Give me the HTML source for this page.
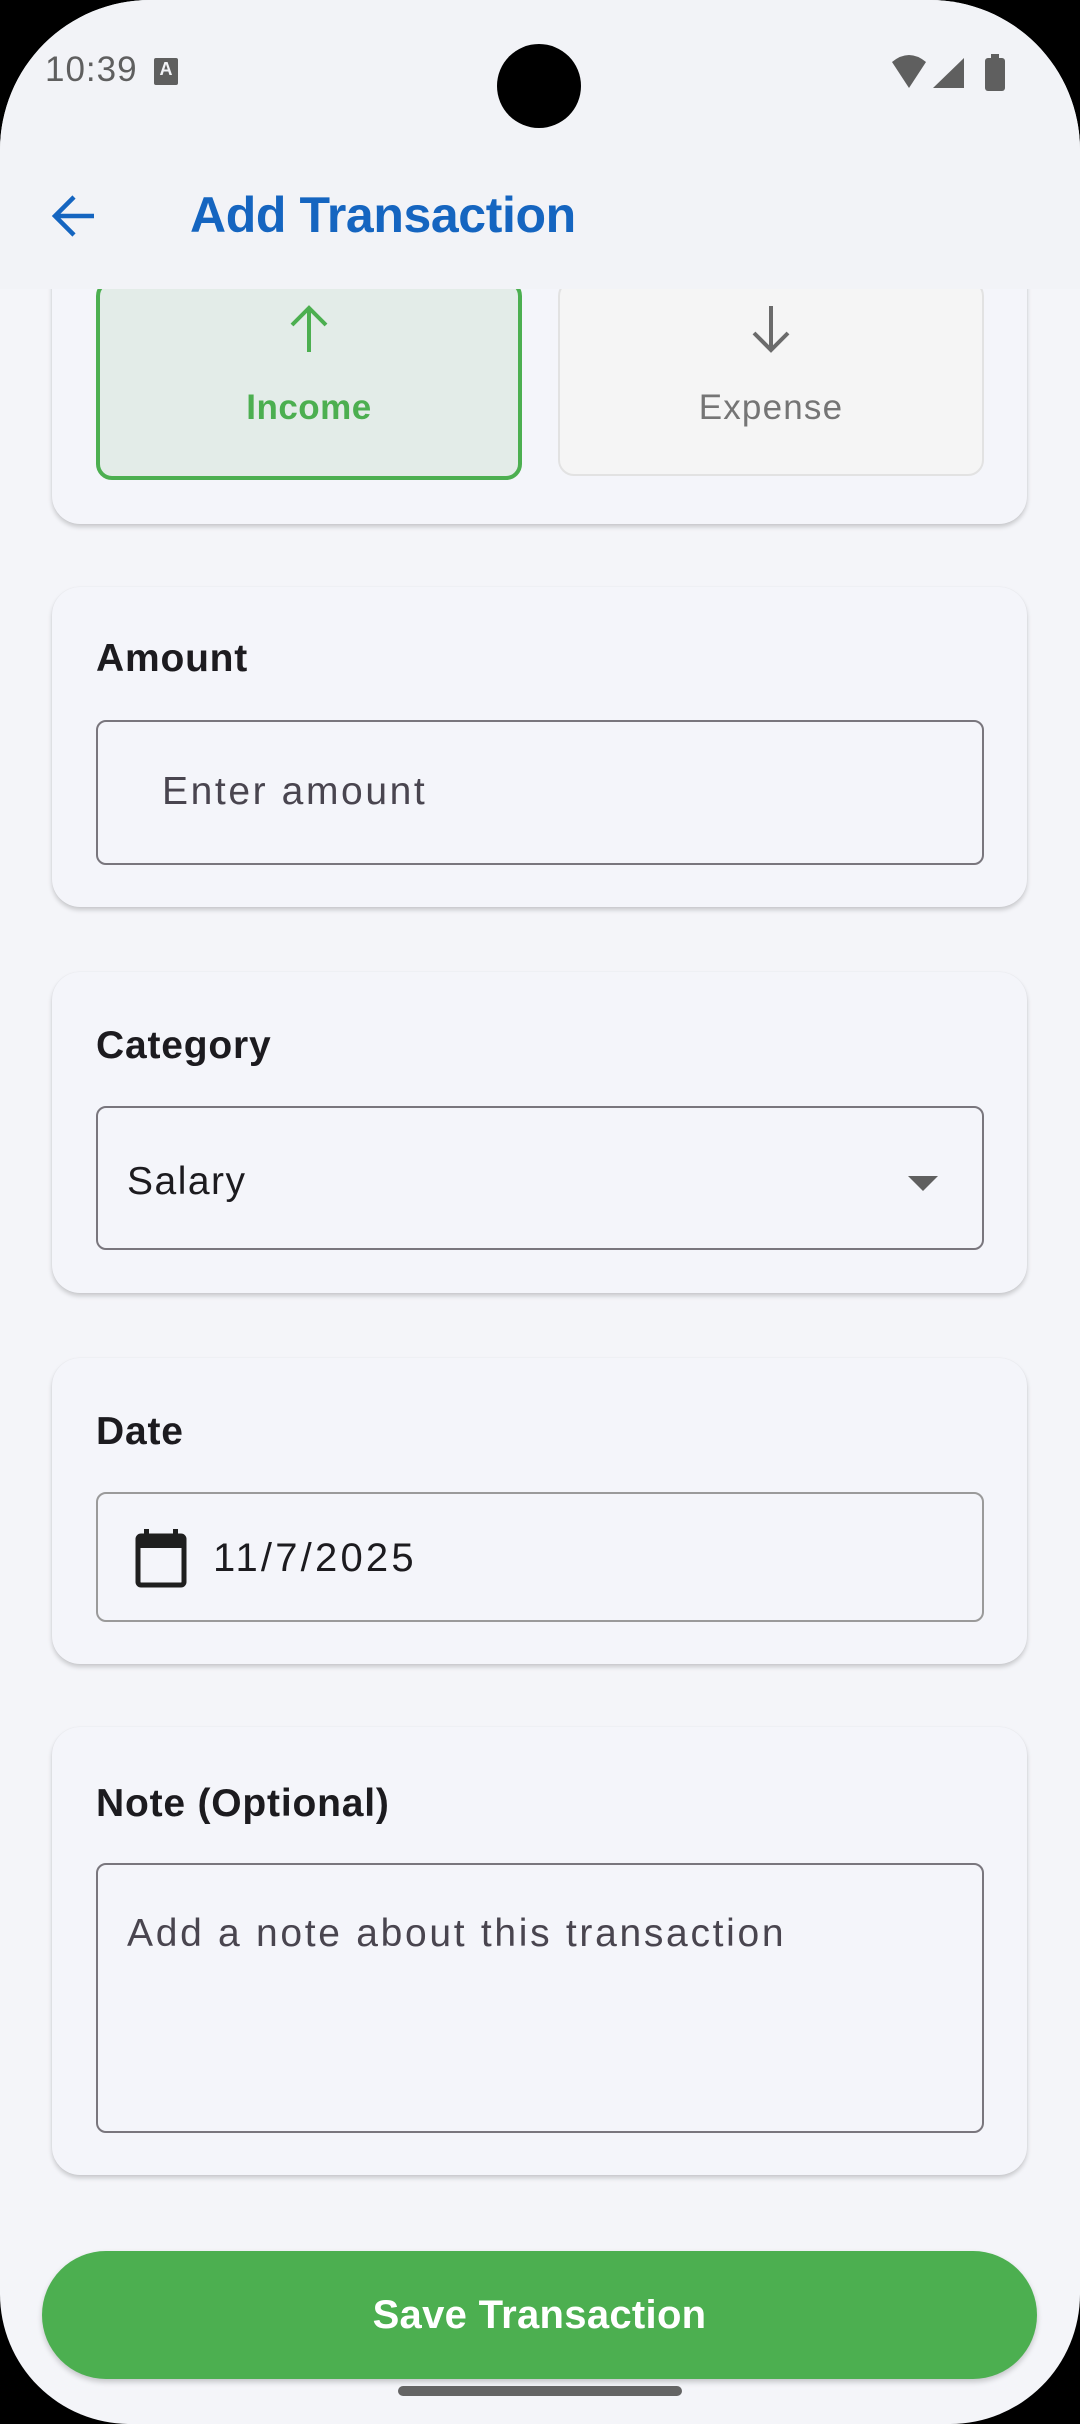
<!DOCTYPE html>
<html><head><meta charset="utf-8"><style>
*{margin:0;padding:0;box-sizing:border-box}
html,body{width:1080px;height:2424px;background:#000;overflow:hidden;font-family:"Liberation Sans",sans-serif}
#screen{position:absolute;left:0;top:0;width:1080px;height:2424px;background:#f4f5f9;border-radius:150px 150px 130px 130px;overflow:hidden}
.abs{position:absolute}
.card{position:absolute;left:52px;width:975px;background:#f4f5fa;border-radius:28px;box-shadow:0 3px 5px rgba(0,0,0,0.18),0 0 1px rgba(0,0,0,0.08)}
.label{position:absolute;left:44px;font-weight:bold;font-size:39px;color:#1c1b1f;letter-spacing:0.8px}
.input{position:absolute;left:44px;width:888px;border:2px solid #79767d;border-radius:10px}
.t{position:absolute;white-space:nowrap;line-height:1}
</style></head><body>
<div id="screen">
  <div class="card" style="top:200px;height:324px">
    <div class="abs" style="left:44px;top:80px;width:426px;height:200px;background:#e3ece8;border:4px solid #4caf50;border-radius:16px"></div>
    <svg class="abs" style="left:234px;top:104px" width="46" height="50" viewBox="0 0 46 50"><path d="M23 4V48M6 21L23 4L40 21" fill="none" stroke="#4caf50" stroke-width="4"/></svg>
    <div class="t" style="left:44px;width:426px;text-align:center;top:190px;font-size:35px;font-weight:bold;color:#4caf50;letter-spacing:0.5px">Income</div>
    <div class="abs" style="left:506px;top:80px;width:426px;height:196px;background:#f5f5f5;border:2px solid #e2e2e2;border-radius:16px"></div>
    <svg class="abs" style="left:696px;top:104px" width="46" height="50" viewBox="0 0 46 50"><path d="M23 2V46M6 29L23 46L40 29" fill="none" stroke="#6b6b6b" stroke-width="4"/></svg>
    <div class="t" style="left:506px;width:426px;text-align:center;top:190px;font-size:35px;color:#757575;letter-spacing:1.2px">Expense</div>
  </div>

  <div class="card" style="top:587px;height:320px">
    <div class="label" style="top:50px">Amount</div>
    <div class="input" style="top:133px;height:145px"></div>
    <div class="t" style="left:110px;top:185px;font-size:39px;color:#49454f;letter-spacing:2.6px">Enter amount</div>
  </div>

  <div class="card" style="top:972px;height:321px">
    <div class="label" style="top:52px">Category</div>
    <div class="input" style="top:134px;height:144px"></div>
    <div class="t" style="left:75px;top:190px;font-size:39px;color:#1c1b1f;letter-spacing:1.5px">Salary</div>
    <svg class="abs" style="left:856px;top:204px" width="30" height="16"><path d="M0 0H30L15 15Z" fill="#5f5f5f"/></svg>
  </div>

  <div class="card" style="top:1358px;height:306px">
    <div class="label" style="top:52px">Date</div>
    <div class="input" style="top:134px;height:130px;border-color:#9a9a9a"></div>
    <svg class="abs" style="left:82px;top:170px" width="54" height="60" viewBox="0 0 54 60"><rect x="4" y="8" width="46" height="49" rx="3" fill="none" stroke="#1f1f1f" stroke-width="5"/><rect x="4" y="8" width="46" height="12" fill="#1f1f1f"/><rect x="10" y="1" width="5" height="9" fill="#1f1f1f"/><rect x="39" y="1" width="5" height="9" fill="#1f1f1f"/></svg>
    <div class="t" style="left:161px;top:180px;font-size:40px;color:#1c1b1f;letter-spacing:3.2px">11/7/2025</div>
  </div>

  <div class="card" style="top:1727px;height:448px">
    <div class="label" style="top:55px">Note (Optional)</div>
    <div class="input" style="top:136px;height:270px"></div>
    <div class="t" style="left:75px;top:187px;font-size:39px;color:#49454f;letter-spacing:2.7px">Add a note about this transaction</div>
  </div>

  <div class="abs" style="left:0;top:0;width:1080px;height:289px;background:#f2f3f7"></div>
  <div class="t" style="left:45px;top:52px;font-size:35px;color:#5f5f5f;letter-spacing:1px">10:39</div>
  <div class="abs" style="left:154px;top:58px;width:24px;height:27px;background:#5f5f5f;border-radius:2px;color:#f2f3f7;font-size:18px;font-weight:bold;text-align:center;line-height:22px">A</div>
  <div class="abs" style="left:497px;top:44px;width:84px;height:84px;border-radius:50%;background:#000"></div>
  <svg class="abs" style="left:890px;top:52px" width="120" height="40" viewBox="0 0 120 40"><path d="M2 10Q19 -4 36 10L19 36Z" fill="#5f5f5f"/><path d="M43 36L74 6V36Z" fill="#5f5f5f"/><rect x="95" y="6" width="20" height="33" rx="3" fill="#5f5f5f"/><rect x="101" y="2" width="8" height="6" fill="#5f5f5f"/></svg>
  <svg class="abs" style="left:50px;top:193px" width="48" height="46" viewBox="0 0 48 46"><path d="M44 23H6M24 4L5 23L24 42" fill="none" stroke="#1565c0" stroke-width="4.5"/></svg>
  <div class="t" style="left:190px;top:190px;font-size:50px;font-weight:bold;color:#1565c0;letter-spacing:-0.4px">Add Transaction</div>

  <div class="abs" style="left:42px;top:2251px;width:995px;height:128px;background:#4caf50;border-radius:64px;box-shadow:0 3px 6px rgba(0,0,0,0.2)"></div>
  <div class="t" style="left:42px;width:995px;text-align:center;top:2295px;font-size:40px;font-weight:bold;color:#fff;letter-spacing:0.3px">Save Transaction</div>
  <div class="abs" style="left:398px;top:2386px;width:284px;height:10px;border-radius:5px;background:#646464"></div>
</div>
</body></html>
